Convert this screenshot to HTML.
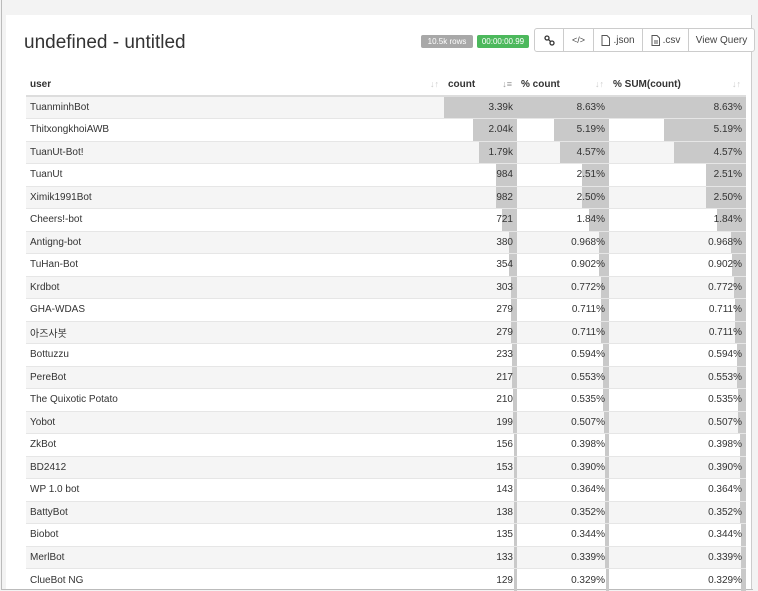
<!DOCTYPE html>
<html><head><meta charset="utf-8"><style>
*{box-sizing:border-box;margin:0;padding:0}
body{width:758px;height:591px;overflow:hidden;background:#f3f3f3;font-family:"Liberation Sans","Noto Sans CJK KR",sans-serif;color:#333;position:relative}
.panel{position:absolute;left:6px;top:15px;width:746px;height:574px;background:#fff;border-right:1px solid #ccc}
.frame{position:absolute;left:1px;top:0;width:1px;height:590px;background:#bbb}
.fb{position:absolute;left:1px;top:589px;width:752px;height:1px;background:#bbb}
h1{position:absolute;left:24px;top:32px;font-size:19px;font-weight:normal;color:#333}
.lab{position:absolute;top:35px;height:13px;font-size:8px;color:#fff;line-height:13px;text-align:center;border-radius:2px}
.btns{position:absolute;left:534px;top:28px;height:24px;display:flex;border:1px solid #ccc;border-radius:3px;background:#fff}
.btns div{border-left:1px solid #ccc;font-size:10px;color:#444;display:flex;align-items:center;justify-content:center;gap:3px}
.btns div:first-child{border-left:none}
table{position:absolute;left:26px;top:73px;border-collapse:collapse;font-size:10px}
th{height:23px;text-align:left;font-weight:bold;font-size:10px;border-bottom:2px solid #ddd;position:relative;padding-left:4px}
th .s{position:absolute;right:5px;top:6px;color:#ccc;font-size:9px;font-weight:normal}
td{height:22.5px;border-top:1px solid #e6e6e6;padding:0;position:relative}
tr.o td{background:#f5f5f5}
td.u{padding-left:4px;width:418px}
td.n{text-align:right;padding-right:4px;position:relative}
td.n i{position:absolute;right:0;top:0;bottom:0;background:#c9c9c9}
td.n span{position:relative}
</style></head><body>
<div class="panel"></div><div class="frame"></div><div class="fb"></div>
<h1>undefined - untitled</h1>
<div class="lab" style="left:421px;width:52px;background:#a8a8a8">10.5k rows</div>
<div class="lab" style="left:477px;width:52px;background:#4cb85c">00:00:00.99</div>
<div class="btns">
<div style="width:28px"><svg width="11" height="11" viewBox="0 0 11 11"><circle cx="3" cy="3" r="2" fill="none" stroke="#333" stroke-width="1.3"/><circle cx="8" cy="8" r="2" fill="none" stroke="#333" stroke-width="1.3"/><path d="M4.3 4.3l2.4 2.4" stroke="#333" stroke-width="1.3"/></svg></div>
<div style="width:30px;font-size:9px">&lt;/&gt;</div>
<div style="width:49px"><svg width="9" height="11" viewBox="0 0 9 11"><path d="M1 .5h5l2.5 2.5v7.5H1z" fill="none" stroke="#555"/></svg>.json</div>
<div style="width:46px"><svg width="9" height="11" viewBox="0 0 9 11"><path d="M1 .5h5l2.5 2.5v7.5H1zM3 6h4M3 8h4" fill="none" stroke="#555"/></svg>.csv</div>
<div style="width:66px">View Query</div>
</div>
<table id="t">
<tr><th style="width:418px">user<span class="s">↓↑</span></th><th style="width:73px">count<span class="s" style="color:#999">↓≡</span></th><th style="width:92px">% count<span class="s">↓↑</span></th><th style="width:137px">% SUM(count)<span class="s">↓↑</span></th></tr>
</table>
<script>
var d=[["TuanminhBot",3390,"3.39k","8.63%"],["ThitxongkhoiAWB",2040,"2.04k","5.19%"],["TuanUt-Bot!",1790,"1.79k","4.57%"],["TuanUt",984,"984","2.51%"],["Ximik1991Bot",982,"982","2.50%"],["Cheers!-bot",721,"721","1.84%"],["Antigng-bot",380,"380","0.968%"],["TuHan-Bot",354,"354","0.902%"],["Krdbot",303,"303","0.772%"],["GHA-WDAS",279,"279","0.711%"],["아즈사봇",279,"279","0.711%"],["Bottuzzu",233,"233","0.594%"],["PereBot",217,"217","0.553%"],["The Quixotic Potato",210,"210","0.535%"],["Yobot",199,"199","0.507%"],["ZkBot",156,"156","0.398%"],["BD2412",153,"153","0.390%"],["WP 1.0 bot",143,"143","0.364%"],["BattyBot",138,"138","0.352%"],["Biobot",135,"135","0.344%"],["MerlBot",133,"133","0.339%"],["ClueBot NG",129,"129","0.329%"]];
var h="";d.forEach(function(r,i){var f=r[1]/3390;h+='<tr class="'+(i%2?'':'o')+'"><td class="u">'+r[0]+'</td>';[73,92,137].forEach(function(w,j){h+='<td class="n"><i style="width:'+Math.max(2,f*w).toFixed(1)+'px"></i><span>'+(j?r[3]:r[2])+'</span></td>'});h+='</tr>'});
document.getElementById('t').insertAdjacentHTML('beforeend',h);
</script>
</body></html>
